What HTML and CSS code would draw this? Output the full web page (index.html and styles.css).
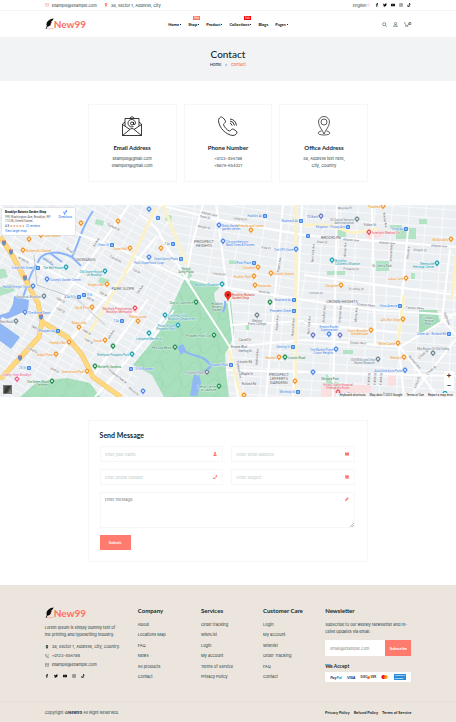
FILE: index.html
```html
<!DOCTYPE html>
<html lang="en">
<head>
<meta charset="utf-8">
<meta name="viewport" content="width=device-width, initial-scale=1">
<title>Contact - New99</title>
<link rel="stylesheet" href="styles.css">
</head>
<body>
<svg class="sprite" aria-hidden="true">
  <symbol id="i-mail" viewBox="0 0 16 12"><path d="M1 1h14v10H1zM1 1l7 6 7-6" fill="none" stroke="currentColor" stroke-width="1.4"/></symbol>
  <symbol id="i-pin" viewBox="0 0 16 16"><path d="M8 0a5 5 0 0 0-5 5c0 4 5 11 5 11s5-7 5-11a5 5 0 0 0-5-5zm0 7a2 2 0 1 1 0-4 2 2 0 0 1 0 4z" fill="currentColor"/></symbol>
  <symbol id="i-phone" viewBox="0 0 16 16"><path d="M4 1 1 3c0 6 6 12 12 12l2-3-4-3-2 2-4-4 2-2zM10 1a5 5 0 0 1 5 5" fill="none" stroke="currentColor" stroke-width="1.3"/></symbol>
  <symbol id="i-fb" viewBox="0 0 16 16"><path d="M6 16V9H3.500V6H6V4c0-2.600 1.500-4 4-4h2v3h-1.400C9.400 3 9 3.500 9 4.400V6h3l-.5 3H9v7z" fill="currentColor"/></symbol>
  <symbol id="i-tw" viewBox="0 0 16 16"><path d="M16 3.500l-1.700 1.600C14.500 11 9.500 14.500 5 14.500c-1.800 0-3.600-.5-5-1.400 1.700.1 3.400-.4 4.700-1.400-1.400 0-2.600-1-3-2.200h1.400C1.600 9.100.6 7.800.6 6.300l1.400.4C.6 5.700.2 3.900 1 2.400 2.700 4.300 5 5.500 7.700 5.600 7.200 3.400 8.800 1.500 11 1.500c1 0 1.800.4 2.400 1l2-.7-1.300 1.800z" fill="currentColor"/></symbol>
  <symbol id="i-yt" viewBox="0 0 16 16"><path d="M2 3h12q2 0 2 2v6q0 2-2 2H2q-2 0-2-2V5q0-2 2-2zm4.500 2.600v4.800L10.600 8z" fill="currentColor"/></symbol>
  <symbol id="i-ig" viewBox="0 0 16 16"><rect x="1.500" y="1.500" width="13" height="13" rx="3.500" fill="none" stroke="currentColor" stroke-width="1.500"/><circle cx="8" cy="8" r="3" fill="none" stroke="currentColor" stroke-width="1.500"/><circle cx="12" cy="4" r="1" fill="currentColor"/></symbol>
  <symbol id="i-tt" viewBox="0 0 16 16"><path d="M8.500 0H11c.2 2 1.400 3.500 3.500 3.800v2.600c-1.300 0-2.500-.4-3.500-1.100V11c0 6-9 6.500-9.500.5C1.300 8.500 4 6.300 7 6.700v2.700C5 9 4 10 4.200 11.300c.3 2.400 4.300 2.400 4.300-.6z" fill="currentColor"/></symbol>
  <symbol id="i-quill" viewBox="0 0 30 36"><path d="M29 0C16 1 5 9 5 20c0 2 .5 4 1 5L2 35h2l4-8c8-1 12-6 12-9l-4 1c5-3 6-5 6-8l-4 1c5-3 8-6 11-12z" fill="#0b0b0b"/><path d="M6 34c6-5 8 3 13 0s5 0 10-1" fill="none" stroke="#fe7062" stroke-width="1.500"/></symbol>
</svg>

<div class="topbar">
  <div class="container topbar-row">
    <div class="topbar-info">
      <span class="with-icon"><svg class="icon coral"><use href="#i-mail"/></svg>example@example.com</span>
      <span class="with-icon"><svg class="icon coral"><use href="#i-pin"/></svg>38, Sector 1, Address, City</span>
    </div>
    <div class="topbar-side">
      <button class="lang" type="button">English <svg class="chev coral" viewBox="0 0 8 8"><path d="M1 3l3-2 3 2M1 5l3 2 3-2" fill="none" stroke="currentColor"/></svg></button>
      <nav class="social" aria-label="Social">
        <a href="#" aria-label="Facebook"><svg class="icon"><use href="#i-fb"/></svg></a>
        <a href="#" aria-label="Twitter"><svg class="icon"><use href="#i-tw"/></svg></a>
        <a href="#" aria-label="YouTube"><svg class="icon"><use href="#i-yt"/></svg></a>
        <a href="#" aria-label="Instagram"><svg class="icon"><use href="#i-ig"/></svg></a>
        <a href="#" aria-label="TikTok"><svg class="icon"><use href="#i-tt"/></svg></a>
      </nav>
    </div>
  </div>
</div>

<header class="header">
  <div class="container header-row">
    <a class="logo" href="#"><svg class="quill"><use href="#i-quill"/></svg>New99</a>
    <nav class="menu" aria-label="Main">
      <a class="drop" href="#">Home</a>
      <a class="drop" href="#">Shop<span class="badge badge-soft">Hot</span></a>
      <a class="drop" href="#">Product</a>
      <a class="drop" href="#">Collections<span class="badge">Sale</span></a>
      <a href="#">Blogs</a>
      <a class="drop" href="#">Pages</a>
    </nav>
    <div class="tools">
      <a href="#" aria-label="Search"><svg viewBox="0 0 16 16"><circle cx="7" cy="7" r="5" fill="none" stroke="currentColor" stroke-width="1.600"/><path d="M11 11l4 4" stroke="currentColor" stroke-width="1.800"/></svg></a>
      <a href="#" aria-label="Account"><svg viewBox="0 0 16 16"><circle cx="8" cy="5" r="3.600" fill="none" stroke="currentColor" stroke-width="1.500"/><path d="M2 15c0-8 12-8 12 0z" fill="none" stroke="currentColor" stroke-width="1.500"/></svg></a>
      <a class="cart" href="#" aria-label="Cart"><svg viewBox="0 0 16 16"><path d="M0 2h3l2 9h8l2-7" fill="none" stroke="currentColor" stroke-width="1.500"/><circle cx="6" cy="14" r="1.500"/><circle cx="12" cy="14" r="1.500"/></svg><sup>0</sup></a>
    </div>
  </div>
</header>

<section class="hero">
  <h1>Contact</h1>
  <nav class="crumbs" aria-label="Breadcrumb"><a href="#">Home</a><span>›</span><span class="coral">Contact</span></nav>
</section>

<section class="cards">
  <article class="card">
    <svg viewBox="0 0 40 40"><g fill="none" stroke="#161616" stroke-width="1.700"><path d="M6 12l-5 4v23h38V16l-5-4M1 17l15 10M39 17L24 27M1 39l16-13q3-2 6 0l16 13M6 20V5h28v15M15 5q5-7 10 0"/><circle cx="20" cy="15" r="3"/><path d="M23 12v5q4 1 4-3a7.500 7.500 0 1 0-4 7"/></g></svg>
    <h2>Email Address</h2>
    <p>example@gmail.com<br>example1@gmail.com</p>
  </article>
  <article class="card">
    <svg viewBox="0 0 40 40"><g fill="none" stroke="#161616" stroke-width="1.700"><path d="M7 2C4 1 1 6 1 9c1 15 15 29 29 30 4 0 9-4 8-7-1-2-7-6-9-6s-4 4-6 4c-4-1-11-8-12-13 0-2 4-3 4-6S9 2 7 2zM24 14q3 1 4 5M24 10q8 1 9 9M24 6q11 1 13 13"/></g></svg>
    <h2>Phone Number</h2>
    <p>+0123-456789<br>+9876-654321</p>
  </article>
  <article class="card">
    <svg viewBox="0 0 40 40"><g fill="none" stroke="#333" stroke-width="1.600"><path d="M20 36C17 28 9 21 9 12a11 11 0 0 1 22 0c0 9-8 16-11 24z"/><circle cx="20" cy="12" r="6"/><path d="M15 30c-10 2-9 8 5 8s15-6 5-8"/></g></svg>
    <h2>Office Address</h2>
    <p>38, Address text here,<br>City, Country</p>
  </article>
</section>

<section class="map" aria-label="Map">
  <svg class="map-canvas" viewBox="0 0 456 192" preserveAspectRatio="xMidYMid slice">
    <defs>
      <pattern id="slope" width="14" height="7" patternUnits="userSpaceOnUse" patternTransform="rotate(29)"><path d="M0 .5h14M.5 0v7" stroke="#fbfbfc" stroke-width=".8"/></pattern>
      <pattern id="heights" width="24" height="9" patternUnits="userSpaceOnUse" patternTransform="rotate(9)"><path d="M0 .5h24M.5 0v9" stroke="#fbfbfc" stroke-width=".8"/></pattern>
      <pattern id="east" width="17" height="9" patternUnits="userSpaceOnUse" patternTransform="rotate(4)"><path d="M0 .5h17M.5 0v9" stroke="#fbfbfc" stroke-width=".8"/></pattern>
      <pattern id="trees" width="19" height="17" patternUnits="userSpaceOnUse"><path d="M0 8q6-9 10 0t9 0M7 0q8 8 0 17" fill="none" stroke="#98d4ae" stroke-width=".6"/></pattern>
    </defs>
    <path d="M0 0h456v192H0z" fill="#eceff2"/>
    <path d="M0 0h160l28 73-60 119H0z" fill="url(#slope)"/>
    <path d="M160 0h146v100L188 73z" fill="url(#heights)"/>
    <path d="M306 0h150v192H226l4-105 76 12z" fill="url(#east)"/>
    <path d="M321 180h50v12h-50zM364 27l14-4 6 8-16 4zM388 170h8v11h-8zM129 104l12 1-2 8-12-2z" fill="#fbe0e1"/>
    <path d="M0 64h5l3 8-8 2zM0 82l12-3 3 7-15 5zM96 14l8 2-1 5-8-2zM100 72l10 3-4 6-8-4zM167 9l5 2-1 6-6-2zM337 25h9v7h-9zM390 20h12v3h14v11h-20V24h-6zM419 14h8v5h-8zM327 66h18v4h-18zM376 56h13v10h-13zM411 68h4v6h-4zM435 107l5 9-4 3zM326 168l6 8 8 2v4h-14zM343 145h10v4h-10zM229 55l9 1v3h-9zM246 119h3v6h-3zM180 62l11 1 1 9-9 2z" fill="#b3e3c5"/>
    <path d="M419 105h18l3 12-21 13z" fill="#a5ddb9"/>
    <path d="M185 73l7 1 30 6 8 5 4 43-4 13-5 7 1 20 3 24h-65l-12-22-19-10 20-24 17-30z" fill="#a8dfbc"/>
    <path d="M185 73l7 1 30 6 8 5 4 43-4 13-5 7 1 20 3 24h-65l-12-22-19-10 20-24 17-30z" fill="url(#trees)"/>
    <path d="M20 192l17-15 30-4 23 5 10 14z" fill="#a8dfbc"/><path d="M20 192l17-15 30-4 23 5 10 14z" fill="url(#trees)"/>
    <path d="M214 88l8-8 8 5 1 11-9 5-7-5z" fill="#edf0f3"/>
    <g fill="none" stroke="#8ab4f8">
      <path d="M93 6Q85 18 80 32t-8 20q-12-6-22-4t-12 9q-7 10-10 21l-5 14" stroke-width="2"/>
      <path d="M72 52l9 9M50 48l12 9M43 53l10 7" stroke-width="2"/>
      <path d="M179 143q9 6 18 8t14 10q-6 7-12 6t-4 16M225 96q1 8-3 11" stroke-width="2"/>
    </g>
    <path d="M14 91l15 4-1 10-9 4-12 5-5-2-2 4v-6l9-3 4-8zM0 118l20 14-9 12-11-8zM177 142l6-3 3 6-5 5z" fill="#92b7f5"/>
    <path d="M193 173l6-3 2 8-4 13h-7z" fill="#93b9f4"/>
    <g fill="none" stroke="#fff" stroke-width="2">
      <path d="M159 0l56 14 89 16 46 4 106 8M140 10q18 12 20 20l27 45M203 0l-11 40-6 34 44 68 8 50M190 74l38 9 76 12 71 10 81 5M230 142l32-3 42-4 52 3 44 4 56-34"/>
      <path d="M129 0L45 118M156 32L60 148M168 108L95 192M152 135l22-30M0 2l115 40 75 34M0 40l140 72M94 170l54-76M216 0l11 83 7 59M283 0l-17 192M302 0l-9 192M337 0l-4 192M372 0l3 140M408 24l-10 110 6 58M450 44l-8 70 14 16M304 70l152 20M304 118l98 10M230 120l74-4M226 165l230 6M400 142l38 50M410 192l46-58"/>
    </g>
    <g fill="none" stroke="#fcf2c8" stroke-width="3"><path d="M156 3l-32 67-38 63M163 0l12 30 12 30M304 20h26l22 8 26-4M296 0v190M404 90l-6 47M229 145l12 47M456 50l-4 44"/></g>
    <path d="M34 50l3 30 40 14 28 26" fill="none" stroke="#c4c8ce"/>
    <g fill="none" stroke="#f0c064" stroke-width="5"><path d="M0 32l11 16 14 26 13 24 4 19 25 15 15 18 11 22 28 20M42 117l-3 15-19 21-20 21"/></g>
    <g fill="none" stroke="#ffd980" stroke-width="4"><path d="M0 32l11 16 14 26 13 24 4 19 25 15 15 18 11 22 28 20M42 117l-3 15-19 21-20 21"/></g>
    <g id="places"></g>
  </svg>
  <div class="place-card">
    <div>
      <strong>Brooklyn Botanic Garden Shop</strong>
      <p>990 Washington Ave, Brooklyn, NY<br>11238, United States</p>
      <p class="rating">4.8 <span>★★★★★</span> <a href="#">22 reviews</a></p>
      <a href="#">View larger map</a>
    </div>
    <a class="directions" href="#"><svg viewBox="0 0 12 16"><path d="M5 16V9H2M5 10q4-1 5-7M8 4l3-3v4zM2 9V5" fill="none" stroke="#1a73e8" stroke-width="2"/></svg>Directions</a>
  </div>
  <div class="satellite"></div>
  <div class="zoom"><button type="button" aria-label="Zoom in">+</button><button type="button" aria-label="Zoom out">−</button></div>
  <div class="credits"><span>Keyboard shortcuts</span><span>Map data ©2023 Google</span><span>Terms of Use</span><span>Report a map error</span></div>
</section>

<form class="form">
  <h2>Send Message</h2>
  <div class="fields">
    <label class="field"><input type="text" placeholder="Enter your name" aria-label="Name"><svg viewBox="0 0 16 16"><circle cx="8" cy="4" r="4"/><path d="M1 16c0-9 14-9 14 0z"/></svg></label>
    <label class="field"><input type="email" placeholder="Enter email address" aria-label="Email"><svg viewBox="0 0 16 16"><path d="M0 2l8 5 8-5v12H0z"/><path d="M0 2h16L8 8z"/></svg></label>
    <label class="field"><input type="tel" placeholder="Enter phone number" aria-label="Phone"><svg viewBox="0 0 16 16"><path d="M12 0l4 1c0 9-6 15-15 15l-1-4 4-2 2 2c3-1 5-3 6-6l-2-2z"/></svg></label>
    <label class="field"><input type="text" placeholder="Enter subject" aria-label="Subject"><svg viewBox="0 0 16 16"><path d="M1 1h14v14H1z"/><path d="M1 12h14" stroke="#fff"/></svg></label>
    <label class="field message"><textarea placeholder="Enter message" aria-label="Message"></textarea><svg viewBox="0 0 16 16"><path d="M0 16l1-5L11 1l4 4L5 15z"/></svg><svg class="grip" viewBox="0 0 8 8"><path d="M0 8l8-8M4 8l4-4" stroke="#777"/></svg></label>
  </div>
  <button class="submit" type="submit">Submit</button>
</form>

<footer class="footer">
  <div class="container footer-grid">
    <div class="about">
      <a class="logo" href="#"><svg class="quill"><use href="#i-quill"/></svg>New99</a>
      <p>Lorem Ipsum is simply dummy text of<br>the printing and typesetting industry.</p>
      <address>
        <span class="with-icon"><svg class="icon"><use href="#i-pin"/></svg>38, Sector 1, Address, City, Country.</span>
        <span class="with-icon"><svg class="icon"><use href="#i-phone"/></svg>+0123-456789</span>
        <span class="with-icon"><svg class="icon"><use href="#i-mail"/></svg>example@example.com</span>
      </address>
      <nav class="social" aria-label="Social links">
        <a href="#" aria-label="Facebook"><svg class="icon"><use href="#i-fb"/></svg></a>
        <a href="#" aria-label="Twitter"><svg class="icon"><use href="#i-tw"/></svg></a>
        <a href="#" aria-label="YouTube"><svg class="icon"><use href="#i-yt"/></svg></a>
        <a href="#" aria-label="Instagram"><svg class="icon"><use href="#i-ig"/></svg></a>
        <a href="#" aria-label="TikTok"><svg class="icon"><use href="#i-tt"/></svg></a>
      </nav>
    </div>
    <nav class="links"><h3>Company</h3><a href="#">About</a><a href="#">Locations Map</a><a href="#">FAQ</a><a href="#">News</a><a href="#">All products</a><a href="#">Contact</a></nav>
    <nav class="links"><h3>Services</h3><a href="#">Order tracking</a><a href="#">WishList</a><a href="#">Login</a><a href="#">My account</a><a href="#">Terms of Service</a><a href="#">Privacy Policy</a></nav>
    <nav class="links"><h3>Customer Care</h3><a href="#">Login</a><a href="#">My account</a><a href="#">Wishlist</a><a href="#">Order Tracking</a><a href="#">FAQ</a><a href="#">Contact</a></nav>
    <div class="news">
      <h3>Newsletter</h3>
      <p>Subscribe to our weekly Newsletter and re-<br>ceive updates via email.</p>
      <form class="subscribe"><input type="email" placeholder="email@example.com" aria-label="Email for newsletter"><button type="submit">Subscribe</button></form>
      <h4>We Accept</h4>
      <div class="pay">
        <span class="paypal">Pay<b>Pal</b></span>
        <span class="visa">VISA</span>
        <span class="discover">DISC<i></i>VER</span>
        <svg class="mc" viewBox="0 0 14 9"><circle cx="4.500" cy="4.500" r="4.500" fill="#eb001b"/><circle cx="9.500" cy="4.500" r="4.500" fill="#f79e1b"/><path d="M7 .8a4.500 4.500 0 0 1 0 7.400 4.500 4.500 0 0 1 0-7.400z" fill="#ff5f00"/></svg>
        <span class="amex">AMERICAN<br>EXPRESS</span>
      </div>
    </div>
  </div>
  <div class="bottom">
    <div class="container bottom-row">
      <span>Copyright ©<b>New99</b> All Right Reserved.</span>
      <nav><a href="#">Privacy Policy</a><a href="#">Refund Policy</a><a href="#">Terms of Service</a></nav>
    </div>
  </div>
</footer>
<script src="map.js"></script>
</body>
</html>
```
FILE: styles.css
```css
* { box-sizing: border-box; }
body { margin: 0; background: #fff; color: #263b3f; font: 4px/7px Inter, "Open Sans", sans-serif; }
h1, h2, h3, h4, p { margin: 0; }
a { color: inherit; text-decoration: none; }
button, input, textarea { font: inherit; color: inherit; margin: 0; padding: 0; border: 0; background: none; border-radius: 0; min-width: 0; outline: 0; }
h1, h2, h3, h4, .menu, .submit { font-family: Lato, sans-serif; color: #12292e; }
.sprite { position: absolute; width: 0; height: 0; }
.container { width: 80.400%; margin: 0 auto; }
.coral { color: #fe7062; }
.icon { width: 4px; height: 4px; flex: none; display: block; }
.with-icon { display: flex; align-items: center; gap: 3px; white-space: nowrap; }

.topbar { border-bottom: 1px solid #f5f5f5; }
.topbar-row, .topbar-info, .topbar-side, .social { display: flex; align-items: center; }
.topbar-row { justify-content: space-between; height: 10px; }
.topbar-info { gap: 7px; }
.topbar-side { gap: 5px; }
.lang { display: flex; align-items: center; gap: 1px; }
.chev { width: 3px; height: 4px; }
.social { gap: 4px; color: #111; }

.header-row { display: grid; grid-template-columns: 1fr auto 1fr; align-items: center; height: 26px; }
.logo { display: flex; align-items: center; color: #fe7062; font: 700 10px/12px Lato, sans-serif; }
.quill { width: 9px; height: 12px; }
.menu { display: flex; gap: 7px; font-weight: 900; }
.menu a { position: relative; display: flex; align-items: center; gap: 1px; }
.drop::after { content: ""; width: 1px; height: 1px; background: #12292e; }
.badge { position: absolute; right: 0; top: -5px; padding: 0 1px; background: #f00; color: #fff; font-size: 3px; line-height: 4px; font-weight: 400; }
.badge-soft { background: #fe7062; right: -1px; }
.tools { display: flex; justify-content: flex-end; align-items: center; gap: 6px; }
.tools svg { width: 5px; height: 5px; display: block; }
.cart { display: flex; }
.cart sup { font: 700 4px/4px Inter, sans-serif; }

.hero { background: #f1f3f4; padding: 10px 0 12px; text-align: center; }
.hero h1 { font-size: 10px; line-height: 14px; font-weight: 500; }
.crumbs { display: flex; justify-content: center; gap: 4px; font-weight: 500; line-height: 8px; }

.cards, .form { width: 61.600%; margin: 23px auto 0; }
.cards { display: grid; grid-template-columns: repeat(3, 1fr); gap: 7px; }
.card { display: flex; flex-direction: column; align-items: center; text-align: center; border: 1px solid #f7f7f7; padding: 11px 4px; }
.card svg { width: 20px; height: 20px; }
.card h2 { font-size: 6px; line-height: 8px; margin: 8px 0 3px; font-weight: 700; }
.card p { padding-bottom: 1px; }

.map { position: relative; margin-top: 23px; overflow: hidden; }
.map-canvas { display: block; width: 100%; height: 192px; font-family: Roboto, sans-serif; }
.place-card { position: absolute; left: 2px; top: 3px; display: flex; justify-content: space-between; gap: 6px; width: 73px; padding: 2px 3px; background: #fff; box-shadow: 0 0 1px #aaa; font: 3px/4px Roboto, sans-serif; color: #555; }
.place-card strong { display: block; line-height: 5px; color: #111; white-space: nowrap; }
.place-card p { white-space: nowrap; }
.place-card a { color: #1a73e8; }
.place-card .rating { line-height: 6px; }
.rating span { color: #e7711b; }
.directions { display: flex; flex-direction: column; align-items: center; }
.directions svg { width: 4px; height: 5px; }
.satellite { position: absolute; left: 3px; bottom: 3px; width: 9px; height: 9px; background: linear-gradient(120deg, #5b625d, #2f3430 50%, #aaa08c); border: 1px solid #777; }
.zoom { position: absolute; right: 2px; bottom: 6px; width: 10px; display: flex; flex-direction: column; background: #fff; color: #444; font: 700 8px/10px Roboto, sans-serif; }
.credits { position: absolute; right: 0; bottom: 0; display: flex; gap: 4px; padding: 0 3px; background: #f5f5f5; color: #222; font: 3px/4px Roboto, sans-serif; }

.form { border: 1px solid #f6f6f6; padding: 10px 12px 11px 11px; }
.form h2 { font-size: 7px; line-height: 9px; margin-bottom: 6px; }
.fields { display: grid; grid-template-columns: 1fr 1fr; gap: 7px 8px; }
.field { position: relative; display: flex; align-items: center; height: 16px; border: 1px solid #f7f7f7; padding: 0 5px 0 4px; }
.field input, .field textarea { flex: 1; height: 100%; }
.field svg { width: 4px; height: 4px; fill: #fe7062; }
.field input::placeholder { color: #b9cac8; }
.message { grid-column: 1 / -1; height: 36px; align-items: flex-start; padding-top: 3px; }
.message textarea { resize: none; line-height: 7px; }
.message textarea::placeholder { color: #777; }
.message svg { margin-top: 1px; }
.message .grip { position: absolute; right: 0; bottom: 0; width: 4px; height: 4px; }
.submit { display: block; width: 31px; height: 15px; margin-top: 7px; background: #fe7b6e; color: #fff; font-weight: 700; }

.footer { margin-top: 23px; background: #ece5dd; color: #24383c; }
.footer-grid { display: grid; grid-template-columns: minmax(0, 93fr) minmax(0, 63fr) minmax(0, 62fr) minmax(0, 62fr) minmax(0, 86fr); padding: 22px 0 19px; }
.about { display: flex; flex-direction: column; }
.about p { margin: 5px 0; white-space: nowrap; }
address { display: flex; flex-direction: column; gap: 2px; margin-bottom: 5px; font-style: normal; }
.about .social { gap: 5px; height: 6px; }
.footer h3 { font-size: 6px; line-height: 8px; white-space: nowrap; }
.links { display: flex; flex-direction: column; justify-content: space-between; padding-bottom: 2px; }
.links h3 { margin-bottom: 2px; }
.footer h4 { font-size: 5px; line-height: 8px; }
.news p { margin: 6px 0 5px; white-space: nowrap; }
.subscribe { display: flex; height: 16px; margin-bottom: 6px; background: #fff; }
.subscribe input { flex: 1; padding-left: 5px; }
.subscribe input::placeholder { color: #888; }
.subscribe button { width: 26px; background: #fe7b6e; color: #fff; font: 700 4px/7px Lato, sans-serif; }
.pay { display: flex; align-items: center; justify-content: space-between; height: 10px; margin-top: 2px; padding: 0 5px; background: #fff; font: 900 3px/3px Lato, sans-serif; }
.paypal { font-size: 4px; font-style: italic; color: #253b80; }
.paypal b { color: #179bd7; }
.visa { font-size: 4px; font-style: italic; color: #1a1f71; }
.discover { display: flex; align-items: center; color: #333; }
.discover i { width: 3px; height: 3px; border-radius: 50%; background: #f47216; }
.mc { width: 7px; height: 4px; }
.amex { padding: 0 1px; background: #2e8bd8; color: #fff; font-size: 2px; }
.bottom { border-top: 1px solid #e7e0d8; }
.bottom-row { display: flex; justify-content: space-between; align-items: center; height: 20px; }
.bottom nav { display: flex; gap: 4px; color: #12292e; font-family: Lato, sans-serif; font-weight: 700; }
```
FILE: map.js
```js
// Each place: x, y, kind, side of the label (l, r, t, b), label lines split by "|".
const colors = { o: '#f29423', b: '#4a86e8', t: '#1aa0b0', g: '#1e8e4e', s: '#70858f', r: '#e8505b', k: '#ee5d92', p: '#6a74c9', m: '#3f85e6' };
const places = [
  [81,19,'o'],[118,17,'o'],[29,35,'o'],[41,31,'o','r','Court Island'],[23,46,'o','r','Buttermilk Channel'],[130,44,'o','l','Union Hall'],
  [107,80,'o','l',"Ginger's Bar"],[92,103,'o','l','Sky & Pine'],[79,123,'o','t','Roast Jolly'],[69,138,'o','l',"Freddy's Bar"],
  [56,150,'o','l',"Greg's Pizza"],[105,136,'o','l','Fonda'],[87,167,'o','l','Greenwood Park'],[138,117,'o','t','Pasta Louise'],
  [149,5,'b'],[149,53,'b','b','Park Slope Food Coop'],[47,75,'b','r',"Cowey's Garden Center"],[33,82,'b','l','Harbor Freight Tools'],
  [25,108,'b','r','The Home Depot'],[143,187,'b'],[66,63,'t','l','The Bell House'],[105,67,'t','l','Old Stone House|of Brooklyn'],
  [149,129,'t','b','Lafayette Memorial'],[132,150,'t','l','Nitehawk Prospect Park'],[44,92,'s','l','Gowanus Brooklyn'],[16,117,'s','l','Red Hook'],
  [135,104,'r','l','NewYork-Presbyterian|Brooklyn Methodist'],[17,175,'k','t','Liberty View Brooklyn'],[113,142,'g'],[95,162,'g','r','Butterfly Gardens'],
  [52,177,'g','l','The Green-Wood|Cemetery'],[112,40,'m','l','Union St'],[38,63,'m','l','Smith-9th Streets'],[79,92,'m','l','4 Av-9 St'],[84,90,'m','r','9 St'],
  [122,116,'m','l','7 Av'],[58,126,'m','l','Prospect Av'],[29,163,'m','l','25 St'],[131,164,'m','r','15 St Prospect'],
  [219,21,'b','r','Natty Garden|garden center'],[223,37,'b','r','Chrysanthemum|Bakd Trees & Flowers'],[296,45,'b','l','The UPS Store'],
  [158,13,'m'],[173,39,'m','l','7 Av'],[181,54,'m','l','Grand Army Plaza'],[265,11,'m','l','Franklin Av'],[301,16,'m','l','Nostrand Av'],
  [254,58,'m','l','Park Place'],[294,95,'m','l','Nostrand Av'],[294,106,'m','l','President Street'],[293,142,'m','l','Sterling St'],
  [231,160,'m','l','Prospect Park'],[298,187,'m','l','Winthrop St'],[251,26,'o','t','Friends and Lovers'],[161,44,'o'],[258,63,'o','l','Chavela’s'],
  [254,72,'o','l','Franklin Park'],[271,69,'o','r','Lincoln Station'],[255,81,'o','r','Starbucks'],[279,153,'o','l','Harmon'],[295,177,'o'],[244,191,'o'],
  [222,80,'t','l','Brooklyn Museum'],[165,111,'t','r','Litchfield Villa|Brooklyn Department'],[178,121,'t','l','Picnic House|Prospect Park'],
  [196,98,'g','l','Dog of Cashmere'],[214,131,'g','l','Prospect Park Zoo'],[175,143,'g','l','Ped Dog Beach'],[270,98,'g'],[285,153,'g','r','Lincoln Road'],
  [219,182,'g','l','LeFrak Center|at Lakeside'],[257,111,'s','b','Medgar|Evers College'],[207,168,'s','l','Prospect Park'],
  [321,12,'p','l','TD Bank'],[313,131,'p'],[340,131,'p'],[349,191,'p'],[357,15,'s','l','US Social Security|Administration'],
  [378,155,'s','l','Old Mills and Ship|Haven Museum'],[433,149,'s','t','Mrs Brown Of Old Valley'],[383,2,'o','l','Peaches'],[451,35,'o','l',"McDonald's"],
  [341,81,'o','l','Daughter'],[406,74,'o','l','Lakou Cafe'],[403,115,'o','l',"Ali's Roti Shop"],[371,126,'o','l',"Tony's Brooklyn|Smokehouse"],
  [398,139,'o','l','White Castle'],[404,153,'o','l',"Wendy's"],[332,56,'t','r',"Brooklyn|Children's Museum"],[437,59,'t','l','Weeksville|Heritage Center'],
  [369,28,'r','r','Interfaith Medical Ctr'],[338,188,'r','t','Kings County Hospital|Emergency Room'],[329,130,'b','t','Empire Rooter|Supermarket'],
  [336,145,'b','l','The Market Place|Crown Heights'],[405,166,'b','l','AutoZone Auto Parts'],[313,168,'b'],[445,189,'t'],
  [348,22,'m','l','Kingston - Throop Avs'],[406,24,'m','l','Utica Av'],[308,31,'m'],[400,101,'m','l','Utica Avenue'],[449,129,'m','l','Sutter Av - Rutland Rd']
];
// Area and street names: x, y, size, rotation, text.
const names = [
  [86,56,4,0,'GOWANUS'],[123,85,4,0,'PARK SLOPE'],[204,38,4,0,'PROSPECT'],[204,42,4,0,'HEIGHTS'],[331,34,4,0,'BROOKLYN'],[342,98,4,0,'CROWN HEIGHTS'],
  [279,171,4,0,'PROSPECT'],[279,175,4,0,'LEFFERTS'],[279,179,4,0,'GARDENS'],[209,10,3,12,'Atlantic Ave'],[351,36,3,5,'Atlantic Ave'],[387,39,3,4,'Atlantic Ave'],
  [439,42,3,4,'Atlantic Ave'],[366,101,3,6,'Eastern Pkwy'],[415,104,3,4,'Eastern Pkwy'],[239,143,3,0,'Empire Blvd'],[358,139,3,3,'Empire Blvd'],
  [314,48,3,-86,'New York Ave'],[310,120,3,-86,'New York Ave'],[346,45,3,-88,'Albany Ave'],[392,48,3,-88,'Schenectady'],[409,48,3,-84,'Utica Ave'],
  [280,60,3,-80,'Rogers Ave'],[278,118,3,-86,'Rogers Ave'],[294,122,3,-86,'Nostrand Ave'],[258,152,3,-86,'Bedford Ave'],[238,165,3,78,'Flatbush Ave'],
  [97,38,3,-60,'3rd Ave'],[141,85,3,-60,'7th Ave'],[112,130,3,-60,'6th Ave'],[48,57,3,28,'9th St'],[60,96,3,28,'10th St'],[60,106,3,28,'12th St'],[90,95,3,28,'6th St'],
  [103,90,3,28,'5th St'],[86,128,3,28,'14th St'],[88,137,3,28,'16th St'],[35,124,3,28,'18th St'],[32,146,3,28,'22nd St'],[54,166,3,28,'23rd St'],[23,56,3,28,'W 9th St'],
  [113,23,3,28,'Sackett St'],[115,55,3,28,'Carroll St'],[136,67,3,28,'1st St'],[117,172,3,38,'Prospect Park W'],[133,187,3,38,'Seeley St'],[70,47,3,40,'Bond St'],
  [205,13,3,10,'Dean St'],[204,23,3,10,'Bergen St'],[240,15,3,8,'Lefferts Pl'],[219,70,3,8,'Lincoln Pl'],[266,44,3,8,'Park Pl'],[264,88,3,8,'Union St'],
  [322,38,3,3,'Dean St'],[351,65,3,3,'Prospect Pl'],[356,85,3,3,'St Johns Pl'],[316,89,3,3,'Lincoln Pl'],[325,109,3,-86,'Brooklyn Ave'],[341,109,3,-86,'Kingston Ave'],
  [357,110,3,-86,'Albany Ave'],[245,136,3,0,'Carroll St'],[245,147,3,0,'Sterling St'],[245,158,3,0,'Lincoln Rd'],[247,170,3,0,'Maple St'],[249,180,3,0,'Rutland Rd'],
  [370,174,3,-86,'E 45th St'],[376,174,3,-86,'E 46th St'],[382,174,3,-86,'E 48th St'],[414,158,3,48,'Remsen Ave'],[424,150,3,-42,'E 95th St'],[432,166,3,-42,'E 94th St'],
  [418,178,3,-70,'E 51st St'],[446,114,3,70,'Ralph Ave'],[384,15,3,80,'Throop Ave'],[345,4,3,-3,'Monroe St'],[370,21,3,0,'Fulton St'],[420,46,3,3,'Bergen St']
];
const parks = [[382,62,"St. John's Park"],[186,65,'Grand|Army Plaza'],[217,100,'Brooklyn|Botanic|Garden'],[428,114,'Lincoln|Terrace|Park'],[330,175,'Wingate Park']];
const halo = 'stroke="#f4f6f8" stroke-width="0.6" paint-order="stroke"';
const text = (x, y, size, color, anchor, value, extra = '') =>
  `<text x="${x}" y="${y}" font-size="${size}" fill="${color}" text-anchor="${anchor}" ${halo} ${extra}>${value.replace('&', '&amp;')}</text>`;
let out = '';
for (const [x, y, size, turn, value] of names) {
  out += text(x, y, size, '#5f666d', 'middle', value, `transform="rotate(${turn} ${x} ${y})"`);
}
for (const [x, y, value] of parks) {
  value.split('|').forEach((line, i) => { out += text(x, y + i * 3, 3, '#35805a', 'middle', line); });
}
for (const [x, y, kind, side, label] of places) {
  const color = colors[kind];
  if (label) {
    const lines = label.split('|');
    const anchor = { l: 'end', r: 'start', t: 'middle', b: 'middle' }[side];
    const dx = { l: -3, r: 3, t: 0, b: 0 }[side];
    const dy = { l: 1, r: 1, t: -4 - (lines.length - 1) * 3, b: 6 }[side];
    lines.forEach((line, i) => { out += text(x + dx, y + dy + i * 3, 3, color, anchor, line); });
  }
  out += kind === 'm'
    ? `<rect x="${x - 2}" y="${y - 2}" width="4" height="4" rx="1" fill="${color}"/><path d="M${x - 1} ${y}h2" stroke="#fff" stroke-width=".8"/>`
    : `<path d="M${x} ${y + 3}q-.4-1.500-1.500-2.200a2.400 2.400 0 1 1 3 0q-1.100.7-1.500 2.200z" fill="${color}" stroke="#fff" stroke-width=".3"/><circle cx="${x}" cy="${y - 1}" r=".9" fill="#fff"/>`;
}
for (const [x, y] of [[4, 38], [11, 47], [25, 73], [41, 112], [20, 153]]) {
  out += `<path d="M${x - 2} ${y - 2}h4v2q0 2-2 3-2-1-2-3z" fill="#6a8fcc"/><path d="M${x - 2} ${y - 2}h4" stroke="#d66a6a"/>`;
}
out += '<path d="M228 97q-.5-3-2-4.500a3.600 3.600 0 1 1 4 0q-1.500 1.500-2 4.500z" fill="#ea2b20"/><circle cx="228" cy="90" r="1.200" fill="#8c1610"/>';
out += text(232, 91, 3, '#d93025', 'start', 'Brooklyn Botanic') + text(232, 94, 3, '#d93025', 'start', 'Garden Shop');
document.getElementById('places').innerHTML = out;
```
